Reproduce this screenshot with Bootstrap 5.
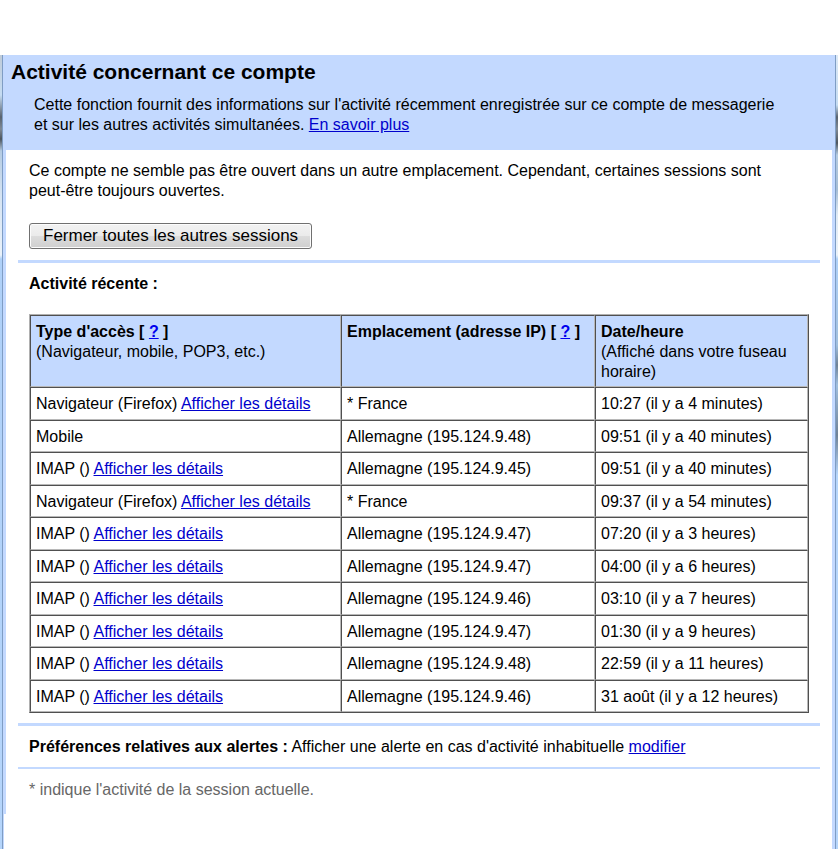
<!DOCTYPE html>
<html lang="fr">
<head>
<meta charset="utf-8">
<meta name="viewport" content="width=device-width, initial-scale=1">
<title>Activité concernant ce compte</title>
<link href="https://cdn.jsdelivr.net/npm/bootstrap@5.3.0/dist/css/bootstrap.min.css" rel="stylesheet">
<style>
:root { --pale: #c3d9ff; --ink-link: #0000cc; }
body { font: 16px/20px "Liberation Sans", Arial, sans-serif; color: #000; padding-top: 55px; background: #fff; }
a { color: var(--ink-link); }
a.help-link { color: #0000ee; }
/* window frame: glass strip, thin line, pale inner edge */
.glass { width: 2px; background: linear-gradient(#bfcbd8 0, #c5dcf2 40px, #59636f 62px, #7f8a96 74px, #4d565f 84px, #b4cbe2 96px, #d5e3f2 140px, #eaf2fa 200px, #aed0f8 204px, #b5d5fb 100%); }
.glass-end { background: linear-gradient(#dce9f7 0, #c5dcf2 50px, #59636f 62px, #7f8a96 74px, #4d565f 88px, #b4cbe2 100px, #a5bdd6 135px, #dfeaf5 160px, #eaf2fa 200px, #aed0f8 204px, #a0bfdf 290px, #6f8297 310px, #a0bfdf 330px, #6f8297 380px, #b5d5fb 420px, #b5d5fb 100%); }
.edge-line { width: 1px; background: #7f9dc4; }
.frame-side { width: 3px; background: var(--pale); }
.frame-start { background: linear-gradient(var(--pale), var(--pale)) top / 3px 759px no-repeat, linear-gradient(90deg, var(--pale) 1px, #fff 1px); }
.intro { background: var(--pale); padding: 6px 5px 15px; }
.intro h1 { font-size: 21px; line-height: 21px; font-weight: bold; margin: 0 0 13px; }
.intro p { margin: 0 45px 0 23px; }
.section-block { padding: 11px 11px 10px; border-bottom: 3px solid var(--pale); }
.section-block h2 { font-size: 16px; line-height: 20px; font-weight: bold; margin-bottom: 20px; }
.session-block { padding-bottom: 11px; }
.session-block p { margin-bottom: 22px; }
.thin-rule { border-bottom-width: 2px; }
.last-note { border-bottom: 0; color: #676767; }
.close-btn { font-size: 17px; line-height: 20px; color: #000; padding: 2px 13px; border: 1px solid #707070; border-radius: 3px; background: linear-gradient(#f2f2f2 0, #ebebeb 50%, #dddddd 50%, #cfcfcf 100%); box-shadow: inset 0 0 0 1px #fcfcfc; }
.access-log { width: 100%; table-layout: fixed; border-collapse: separate; border-spacing: 0; border: 1px solid; border-color: #b0b0b0 #505050 #505050 #b0b0b0; }
.access-log th, .access-log td { border: 1px solid; border-color: #505050 #b8b8b8 #b8b8b8 #505050; padding: 6px 5px 4px; vertical-align: top; text-align: left; }
.access-log th { background: var(--pale); font-weight: bold; }
.access-log th span { font-weight: normal; }
.access-log tbody tr { height: 32px; }
.access-log tbody tr:nth-child(odd) { height: 33px; }
.col-kind { width: 311px; }
.col-place { width: 254px; }
</style>
<script src="https://cdn.jsdelivr.net/npm/bootstrap@5.3.0/dist/js/bootstrap.bundle.min.js"></script>
</head>
<body class="d-flex min-vh-100">
<div class="glass flex-shrink-0"></div><div class="edge-line flex-shrink-0"></div><div class="frame-side frame-start flex-shrink-0"></div>
<main class="flex-grow-1">
  <header class="intro">
    <h1>Activité concernant ce compte</h1>
    <p>Cette fonction fournit des informations sur l'activité récemment enregistrée sur ce compte de messagerie et sur les autres activités simultanées. <a href="#">En savoir plus</a></p>
  </header>
  <div class="px-2 mx-1">
    <section class="section-block session-block">
      <p>Ce compte ne semble pas être ouvert dans un autre emplacement. Cependant, certaines sessions sont <span class="text-nowrap">peut-être</span> toujours ouvertes.</p>
      <button type="button" class="close-btn d-block">Fermer toutes les autres sessions</button>
    </section>
    <section class="section-block">
      <h2>Activité récente :</h2>
      <table class="access-log">
        <colgroup><col class="col-kind"><col class="col-place"><col></colgroup>
        <thead>
          <tr>
            <th scope="col">Type d'accès [ <a href="#" class="help-link">?</a> ]<br><span>(Navigateur, mobile, POP3, etc.)</span></th>
            <th scope="col">Emplacement (adresse IP) [ <a href="#" class="help-link">?</a> ]</th>
            <th scope="col">Date/heure<br><span>(Affiché dans votre fuseau horaire)</span></th>
          </tr>
        </thead>
        <tbody>
          <tr><td>Navigateur (Firefox) <a href="#">Afficher les détails</a></td><td>* France</td><td>10:27 (il y a 4 minutes)</td></tr>
          <tr><td>Mobile</td><td>Allemagne (195.124.9.48)</td><td>09:51 (il y a 40 minutes)</td></tr>
          <tr><td>IMAP () <a href="#">Afficher les détails</a></td><td>Allemagne (195.124.9.45)</td><td>09:51 (il y a 40 minutes)</td></tr>
          <tr><td>Navigateur (Firefox) <a href="#">Afficher les détails</a></td><td>* France</td><td>09:37 (il y a 54 minutes)</td></tr>
          <tr><td>IMAP () <a href="#">Afficher les détails</a></td><td>Allemagne (195.124.9.47)</td><td>07:20 (il y a 3 heures)</td></tr>
          <tr><td>IMAP () <a href="#">Afficher les détails</a></td><td>Allemagne (195.124.9.47)</td><td>04:00 (il y a 6 heures)</td></tr>
          <tr><td>IMAP () <a href="#">Afficher les détails</a></td><td>Allemagne (195.124.9.46)</td><td>03:10 (il y a 7 heures)</td></tr>
          <tr><td>IMAP () <a href="#">Afficher les détails</a></td><td>Allemagne (195.124.9.47)</td><td>01:30 (il y a 9 heures)</td></tr>
          <tr><td>IMAP () <a href="#">Afficher les détails</a></td><td>Allemagne (195.124.9.48)</td><td>22:59 (il y a 11 heures)</td></tr>
          <tr><td>IMAP () <a href="#">Afficher les détails</a></td><td>Allemagne (195.124.9.46)</td><td>31 août (il y a 12 heures)</td></tr>
        </tbody>
      </table>
    </section>
    <section class="section-block thin-rule"><strong>Préférences relatives aux alertes :</strong> Afficher une alerte en cas d'activité inhabituelle <a href="#">modifier</a></section>
    <footer class="section-block last-note">* indique l'activité de la session actuelle.</footer>
  </div>
</main>
<div class="frame-side flex-shrink-0"></div><div class="edge-line flex-shrink-0"></div><div class="glass glass-end flex-shrink-0"></div>
</body>
</html>
